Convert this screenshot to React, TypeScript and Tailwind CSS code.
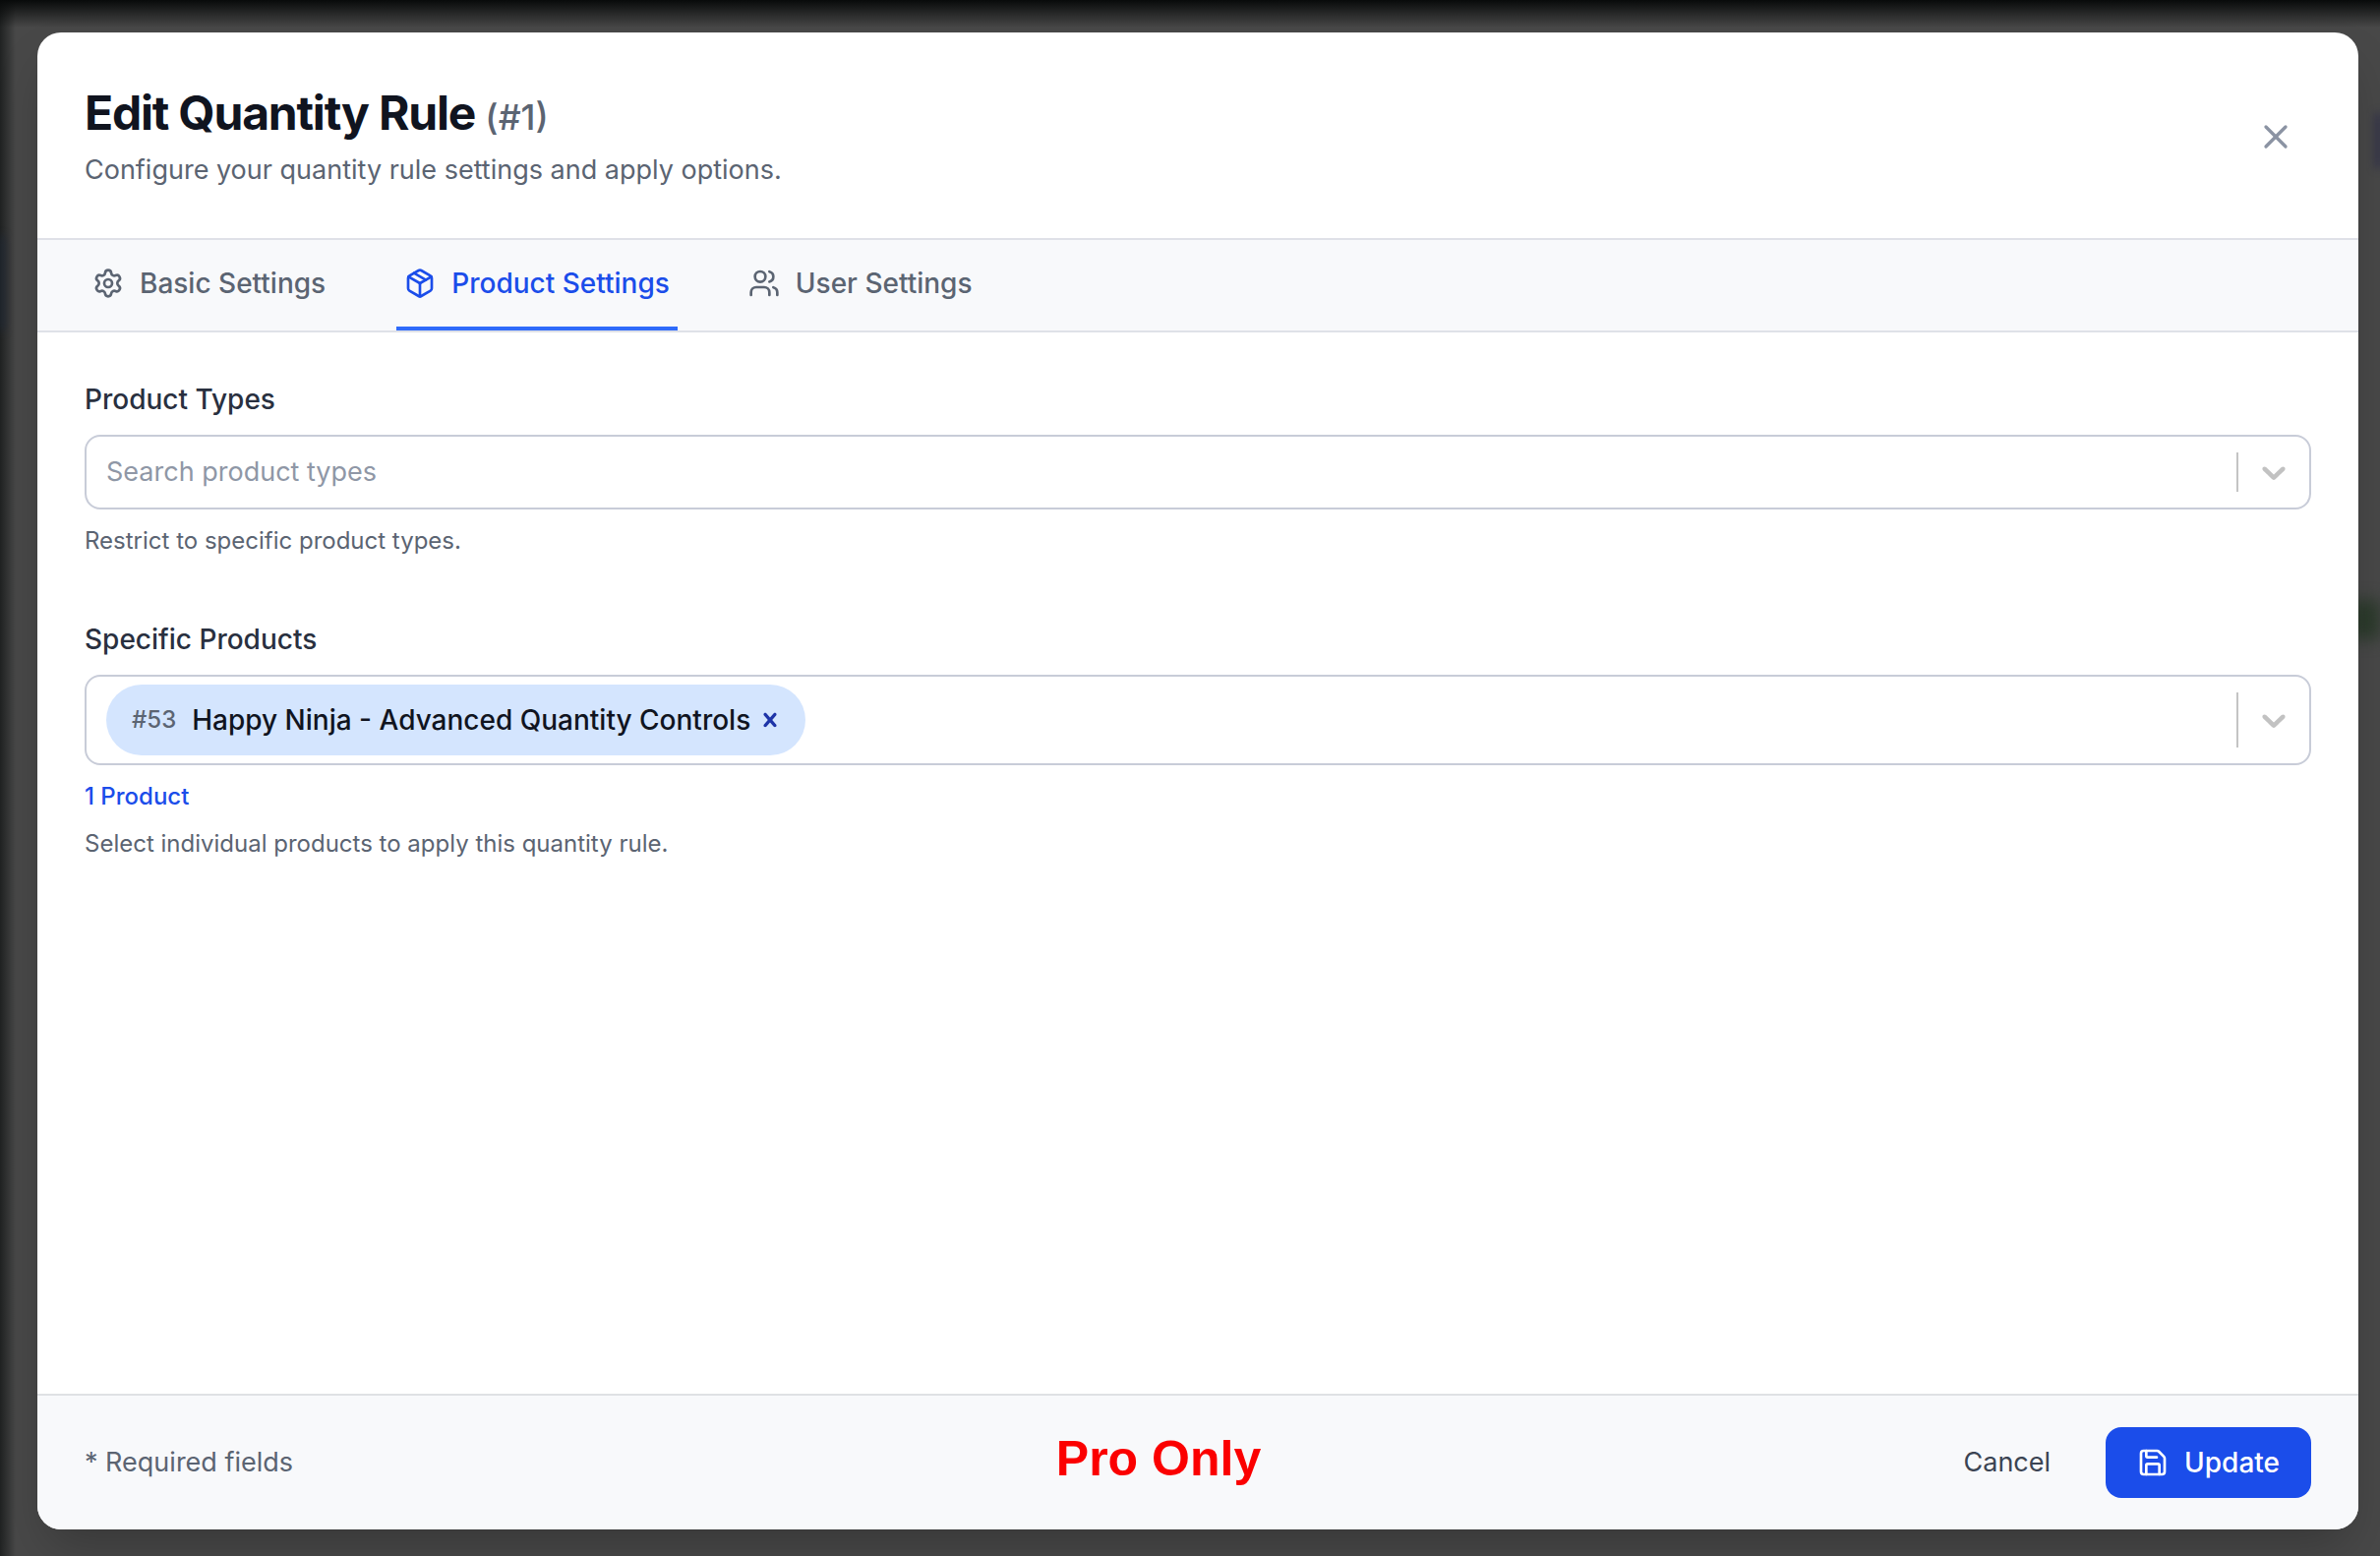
import { useState } from "react";
import { Package, Save, Settings, Users, X } from "lucide-react";

const tabs = [
  { label: "Basic Settings", Icon: Settings },
  { label: "Product Settings", Icon: Package },
  { label: "User Settings", Icon: Users },
];

function Chevron() {
  return (
    <svg viewBox="0 0 20 20" className="size-10 fill-[#c2c2c2]" aria-hidden="true">
      <path d="M4.516 7.548c0.436-0.446 1.043-0.481 1.576 0l3.908 3.747 3.908-3.747c0.533-0.481 1.141-0.446 1.574 0 0.436 0.445 0.408 1.197 0 1.615-0.406 0.418-4.695 4.502-4.695 4.502-0.217 0.223-0.502 0.335-0.787 0.335s-0.57-0.112-0.789-0.335c0 0-4.287-4.084-4.695-4.502s-0.436-1.17 0-1.615z" />
    </svg>
  );
}

function Indicator({ label }: { label: string }) {
  return (
    <div className="flex items-center self-stretch">
      <span className="my-4 w-0.5 self-stretch bg-[#c4c4c4]" />
      <button type="button" aria-label={label} className="flex h-full items-center px-4">
        <Chevron />
      </button>
    </div>
  );
}

export default function App() {
  const [active, setActive] = useState(1);
  return (
    <div className="relative isolate flex min-h-screen overflow-hidden bg-[#484848] pt-[33px] pr-[22px] pb-[27px] pl-[38px] font-['Inter',sans-serif] text-[27px] leading-10">
      <div aria-hidden="true" className="absolute inset-0 -z-10">
        <div className="absolute inset-y-0 left-0 w-4 bg-gradient-to-r from-[#202222] to-transparent" />
        <div className="absolute inset-x-0 top-0 h-7 bg-gradient-to-b from-[#080a0a] to-transparent" />
        <div className="absolute top-[240px] left-0 h-24 w-1 bg-[#1f2a3c] blur-xs" />
        <div className="absolute top-[115px] right-0 h-14 w-1 bg-[#25254a] blur-xs" />
        <div className="absolute top-[610px] right-0 h-10 w-8 bg-[#2b3a2b] blur-sm" />
      </div>
      <main role="dialog" aria-labelledby="title" className="flex min-w-0 flex-1 flex-col overflow-hidden rounded-3xl bg-white shadow-2xl">
        <header className="flex items-center justify-between border-b-2 border-[#dfe1e8] px-12 pt-[50px] pb-12">
          <div>
            <h1 id="title" className="text-5xl leading-[64px] font-bold tracking-tight text-[#10141f]">
              Edit Quantity Rule <span className="text-4xl leading-none font-medium tracking-normal text-[#5b6472]">(#1)</span>
            </h1>
            <p className="pt-1 leading-[43px] text-[#5b6472]">Configure your quantity rule settings and apply options.</p>
          </div>
          <button type="button" aria-label="Close" className="p-4 text-[#8b93a3]">
            <X className="size-10" strokeWidth={2} />
          </button>
        </header>
        <nav className="flex gap-16 border-b-2 border-[#dfe1e8] bg-[#f8f9fb] px-12">
          {tabs.map(({ label, Icon }, i) => (
            <button
              key={label}
              type="button"
              onClick={() => setActive(i)}
              className={`flex h-[92px] items-center gap-4 border-b-4 px-2 text-[28px] font-medium ${
                i === active ? "border-[#2f6bfa] text-[#1b4dea]" : "border-transparent text-[#5b6472]"
              }`}
            >
              <Icon className="size-8" strokeWidth={2} />
              {label}
            </button>
          ))}
        </nav>
        <section className="flex flex-1 flex-col px-12 pt-12">
          <label htmlFor="types" className="text-[28px] leading-10 font-medium text-[#29303f]">Product Types</label>
          <div className="mt-4 flex h-[76px] items-center rounded-2xl border-2 border-[#c8ccd8] pl-5">
            <input id="types" placeholder="Search product types" className="min-w-0 flex-1 outline-none placeholder:text-[#8f97a6]" />
            <Indicator label="Show product types" />
          </div>
          <p className="mt-3 text-2xl leading-10 text-[#5b6472]">Restrict to specific product types.</p>

          <label htmlFor="products" className="mt-[60px] text-[28px] leading-10 font-medium text-[#29303f]">Specific Products</label>
          <div className="mt-4 flex h-[92px] items-center rounded-2xl border-2 border-[#c8ccd8] pl-5">
            <div className="flex h-[72px] items-center rounded-full bg-[#d4e5fe] pr-4 pl-[26px]">
              <span className="pr-4 text-2xl font-medium text-[#5b6472]">#53</span>
              <span className="text-[28px] font-medium text-[#10141f]">Happy Ninja - Advanced Quantity Controls</span>
              <button type="button" aria-label="Remove product" className="flex size-10 items-center justify-center text-[#1e34a8]">
                <svg viewBox="0 0 20 20" className="size-7 fill-current" aria-hidden="true">
                  <path d="M14.348 14.849c-0.469 0.469-1.229 0.469-1.697 0l-2.651-3.030-2.651 3.029c-0.469 0.469-1.229 0.469-1.697 0-0.469-0.469-0.469-1.229 0-1.697l2.758-3.15-2.759-3.152c-0.469-0.469-0.469-1.228 0-1.697s1.228-0.469 1.697 0l2.652 3.031 2.651-3.031c0.469-0.469 1.228-0.469 1.697 0s0.469 1.229 0 1.697l-2.758 3.152 2.758 3.15c0.469 0.469 0.469 1.229 0 1.698z" />
                </svg>
              </button>
            </div>
            <input id="products" className="min-w-0 flex-1 outline-none" />
            <Indicator label="Show products" />
          </div>
          <p className="mt-3 text-2xl leading-10 font-medium text-[#1b4dea]">1 Product</p>
          <p className="mt-2 text-2xl leading-10 text-[#5b6472]">Select individual products to apply this quantity rule.</p>
        </section>
        <footer className="grid grid-cols-[1fr_auto_1fr] items-center border-t-2 border-[#dfe1e4] bg-[#f8f9fb] px-12 py-8">
          <p className="text-[#5b6472]">* Required fields</p>
          <p className="pr-20 pb-2 font-['Liberation_Sans',sans-serif] text-[50px] leading-[60px] font-bold text-[#fb0000]">Pro Only</p>
          <div className="flex items-center justify-end gap-6">
            <button type="button" className="px-8 py-4 text-[#3b4453]">Cancel</button>
            <button type="button" className="flex h-[72px] items-center gap-4 rounded-2xl bg-[#1b4dea] px-8 text-[28px] font-medium text-white">
              <Save className="size-8" strokeWidth={2} />
              Update
            </button>
          </div>
        </footer>
      </main>
    </div>
  );
}
